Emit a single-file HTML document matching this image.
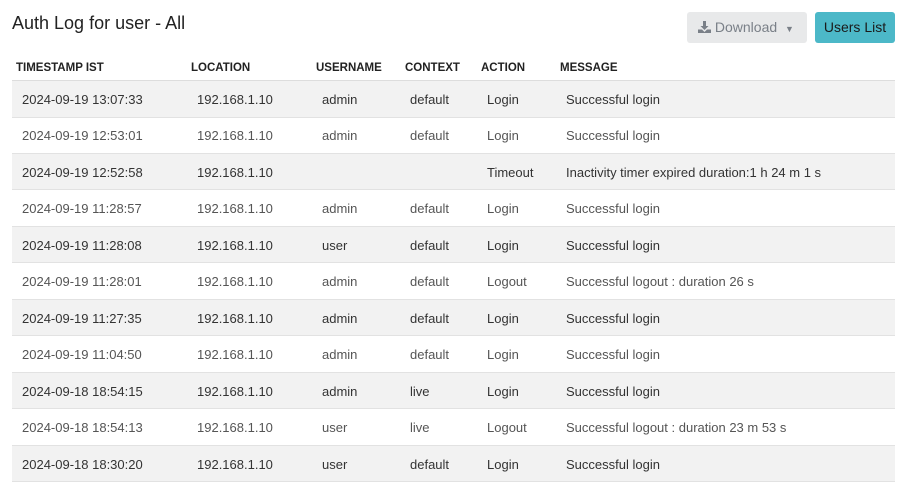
<!DOCTYPE html>
<html><head><style>
body{margin:0;width:902px;height:483px;background:#fff;font-family:"Liberation Sans",sans-serif;position:relative;overflow:hidden;color:#333}
.t{position:absolute;left:12px;top:13px;font-size:18px;color:#222}
.btn{position:absolute;top:12px;height:31px;border-radius:3px;font-size:14px;line-height:31px;box-sizing:border-box}
.dl{left:687px;width:120px;background:#e8e9ea;color:#7a8088;padding-left:11px}
.ul{left:815px;width:80px;background:#4cb8c8;color:#1a1a1a;text-align:center}
.hd{position:absolute;top:55px;left:12px;width:883px;height:26px;border-bottom:1px solid #ddd;box-sizing:border-box;font-size:11.5px;font-weight:bold;color:#222}
.row{position:absolute;left:12px;width:883px;height:36.5px;border-bottom:1px solid #e2e2e2;box-sizing:border-box;font-size:13px}
.row.o{background:#f2f2f2;color:#333}
.row.e{color:#555}
.c{position:absolute;top:1px;line-height:36px;white-space:nowrap}
.hd .c{line-height:26px;top:0}
</style></head><body>
<div class="t">Auth Log for user - All</div>
<div class="btn dl"><svg width="13" height="12" viewBox="0 0 13 12" style="vertical-align:-1px"><path d="M5 0h3v5h2.5L6.5 9 2.5 5H5z M0 8.5h4l2.5 2.5L9 8.5h4V12H0z" fill="#7a8088"/></svg> Download <span style="font-size:9px;margin-left:4px">▼</span></div>
<div class="btn ul">Users List</div>
<div class="hd"><span class="c" style="left:4px">TIMESTAMP IST</span><span class="c" style="left:179px">LOCATION</span><span class="c" style="left:304px">USERNAME</span><span class="c" style="left:393px">CONTEXT</span><span class="c" style="left:469px">ACTION</span><span class="c" style="left:548px">MESSAGE</span></div>
<div id="rows"></div>
<script>
var d=[["2024-09-19 13:07:33","admin","default","Login","Successful login"],
["2024-09-19 12:53:01","admin","default","Login","Successful login"],
["2024-09-19 12:52:58","","","Timeout","Inactivity timer expired duration:1 h 24 m 1 s"],
["2024-09-19 11:28:57","admin","default","Login","Successful login"],
["2024-09-19 11:28:08","user","default","Login","Successful login"],
["2024-09-19 11:28:01","admin","default","Logout","Successful logout : duration 26 s"],
["2024-09-19 11:27:35","admin","default","Login","Successful login"],
["2024-09-19 11:04:50","admin","default","Login","Successful login"],
["2024-09-18 18:54:15","admin","live","Login","Successful login"],
["2024-09-18 18:54:13","user","live","Logout","Successful logout : duration 23 m 53 s"],
["2024-09-18 18:30:20","user","default","Login","Successful login"]];
var h="";d.forEach(function(r,i){h+='<div class="row '+(i%2?'e':'o')+'" style="top:'+(81+i*36.45)+'px"><span class="c" style="left:10px">'+r[0]+'</span><span class="c" style="left:185px">192.168.1.10</span><span class="c" style="left:310px">'+r[1]+'</span><span class="c" style="left:398px">'+r[2]+'</span><span class="c" style="left:475px">'+r[3]+'</span><span class="c" style="left:554px">'+r[4]+'</span></div>';});
document.getElementById("rows").innerHTML=h;
</script>
</body></html>
